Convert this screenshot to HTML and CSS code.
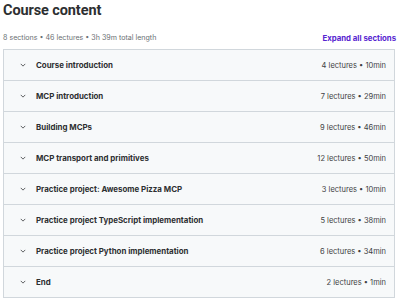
FILE: index.html
```html
<!DOCTYPE html>
<html lang="en">
<head>
  <meta charset="UTF-8">
  <title>Course content</title>
  <link rel="stylesheet" href="styles.css">
</head>
<body>
  <div class="content">
    <h2>Course content</h2>

    <div class="meta">
      <span>8 sections • 46 lectures • 3h 39m total length</span>
      <a href="#" class="expand">Expand all sections</a>
    </div>

    <div class="sections">
      <div class="section"><span class="chev"><svg viewBox="0 0 8 5"><path d="M1 1l3 3 3-3"/></svg></span><span class="title">Course introduction</span><span class="info">4 lectures • 10min</span></div>
      <div class="section"><span class="chev"><svg viewBox="0 0 8 5"><path d="M1 1l3 3 3-3"/></svg></span><span class="title">MCP introduction</span><span class="info">7 lectures • 29min</span></div>
      <div class="section"><span class="chev"><svg viewBox="0 0 8 5"><path d="M1 1l3 3 3-3"/></svg></span><span class="title">Building MCPs</span><span class="info">9 lectures • 46min</span></div>
      <div class="section"><span class="chev"><svg viewBox="0 0 8 5"><path d="M1 1l3 3 3-3"/></svg></span><span class="title">MCP transport and primitives</span><span class="info">12 lectures • 50min</span></div>
      <div class="section"><span class="chev"><svg viewBox="0 0 8 5"><path d="M1 1l3 3 3-3"/></svg></span><span class="title">Practice project: Awesome Pizza MCP</span><span class="info">3 lectures • 10min</span></div>
      <div class="section"><span class="chev"><svg viewBox="0 0 8 5"><path d="M1 1l3 3 3-3"/></svg></span><span class="title">Practice project TypeScript implementation</span><span class="info">5 lectures • 38min</span></div>
      <div class="section"><span class="chev"><svg viewBox="0 0 8 5"><path d="M1 1l3 3 3-3"/></svg></span><span class="title">Practice project Python implementation</span><span class="info">6 lectures • 34min</span></div>
      <div class="section"><span class="chev"><svg viewBox="0 0 8 5"><path d="M1 1l3 3 3-3"/></svg></span><span class="title">End</span><span class="info">2 lectures • 1min</span></div>
    </div>
  </div>
</body>
</html>
```

FILE: styles.css
```css
body {
  margin: 0;
  padding: 0;
  background: #fff;
  font-family: 'Inter', 'Liberation Sans', sans-serif;
  color: #2d2f31;
}

.content {
  padding: 0 3px 0 3px;
  width: 392px;
}

h2 {
  margin: 0;
  padding: 1px 0 0 0;
  height: 23px;
  font-family: 'Roboto', 'Liberation Sans', sans-serif;
  font-size: 14.5px;
  font-weight: 700;
  line-height: 20px;
  letter-spacing: -0.1px;
}

.meta {
  display: flex;
  justify-content: space-between;
  align-items: center;
  box-sizing: border-box;
  height: 25px;
  padding-top: 2px;
  font-size: 7.1px;
  color: #6a6f73;
}

.expand {
  color: #5624d0;
  font-weight: 700;
  font-size: 7.8px;
  text-decoration: none;
  margin-right: -1px;
}

.sections {
  border: 1px solid #d1d7dc;
}

.section {
  display: flex;
  align-items: center;
  height: 30px;
  padding: 0 8px 0 16px;
  background: #f7f9fa;
  border-bottom: 1px solid #d1d7dc;
}

.section:last-child {
  border-bottom: none;
}

.chev {
  width: 16px;
  display: flex;
  align-items: center;
}

.chev svg {
  width: 6px;
  height: 4px;
  fill: none;
  stroke: #2d2f31;
  stroke-width: 1;
}

.title {
  flex: 1;
  font-size: 7.9px;
  font-weight: 700;
}

.info {
  font-size: 7.5px;
  color: #3e4143;
}
```
